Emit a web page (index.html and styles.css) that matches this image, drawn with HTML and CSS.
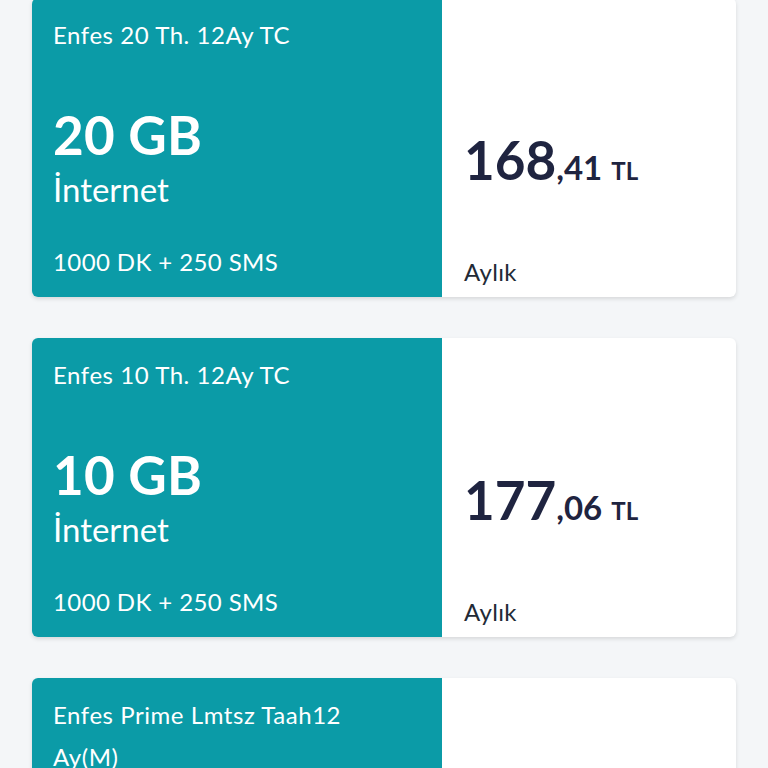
FILE: index.html
```html
<!DOCTYPE html>
<html lang="tr">
<head>
<meta charset="utf-8">
<link rel="stylesheet" href="styles.css">
</head>
<body>
<div class="list">
  <div class="card">
    <div class="info">
      <div class="title">Enfes 20 Th. 12Ay TC</div>
      <div class="gb">20 GB</div>
      <div class="net">İnternet</div>
      <div class="extra">1000 DK + 250 SMS</div>
    </div>
    <div class="pricebox">
      <div class="price"><span class="int">168</span><span class="dec">,41</span><span class="cur">TL</span></div>
      <div class="period">Aylık</div>
    </div>
  </div>
  <div class="card">
    <div class="info">
      <div class="title">Enfes 10 Th. 12Ay TC</div>
      <div class="gb">10 GB</div>
      <div class="net">İnternet</div>
      <div class="extra">1000 DK + 250 SMS</div>
    </div>
    <div class="pricebox">
      <div class="price"><span class="int">177</span><span class="dec">,06</span><span class="cur">TL</span></div>
      <div class="period">Aylık</div>
    </div>
  </div>
  <div class="card">
    <div class="info">
      <div class="title">Enfes Prime Lmtsz Taah12 Ay(M)</div>
    </div>
    <div class="pricebox"></div>
  </div>
</div>
</body>
</html>
```
FILE: styles.css
```css
html, body {
  margin: 0;
  padding: 0;
  background: #f4f6f8;
  font-family: Lato, "Noto Sans", sans-serif;
}
.list {
  display: flex;
  flex-direction: column;
  gap: 41px;
  margin: -2px 32px 0 32px;
}
.card {
  display: flex;
  height: 299px;
  border-radius: 6px;
  overflow: hidden;
  background: #ffffff;
  box-shadow: 0 2px 4px rgba(0, 0, 0, 0.12);
  flex-shrink: 0;
}
.info {
  width: 410px;
  flex-shrink: 0;
  background: #0b9ba7;
  color: #ffffff;
  box-sizing: border-box;
  padding: 16px 21px 0 21px;
  display: flex;
  flex-direction: column;
}
.title {
  font-size: 24px;
  line-height: 42px;
  letter-spacing: 0.55px;
  width: 330px;
}
.gb {
  font-size: 53px;
  font-weight: 700;
  line-height: 56px;
  margin-top: 51px;
  letter-spacing: 0.3px;
}
.net {
  font-size: 33px;
  line-height: 36px;
  margin-top: 8px;
}
.extra {
  font-size: 24px;
  line-height: 30px;
  margin-top: 40px;
  letter-spacing: 0.4px;
}
.pricebox {
  flex: 1;
  padding: 0 0 0 22px;
  display: flex;
  flex-direction: column;
  color: #1f2440;
}
.price {
  margin-top: 134px;
  line-height: 56px;
  white-space: nowrap;
}
.int {
  font-size: 53px;
  font-weight: 700;
}
.dec {
  font-size: 33px;
  font-weight: 700;
}
.cur {
  font-size: 24px;
  font-weight: 700;
  margin-left: 9px;
}
.period {
  font-size: 24px;
  line-height: 30px;
  margin-top: 55px;
  color: #222a36;
  letter-spacing: 0.3px;
}
```
